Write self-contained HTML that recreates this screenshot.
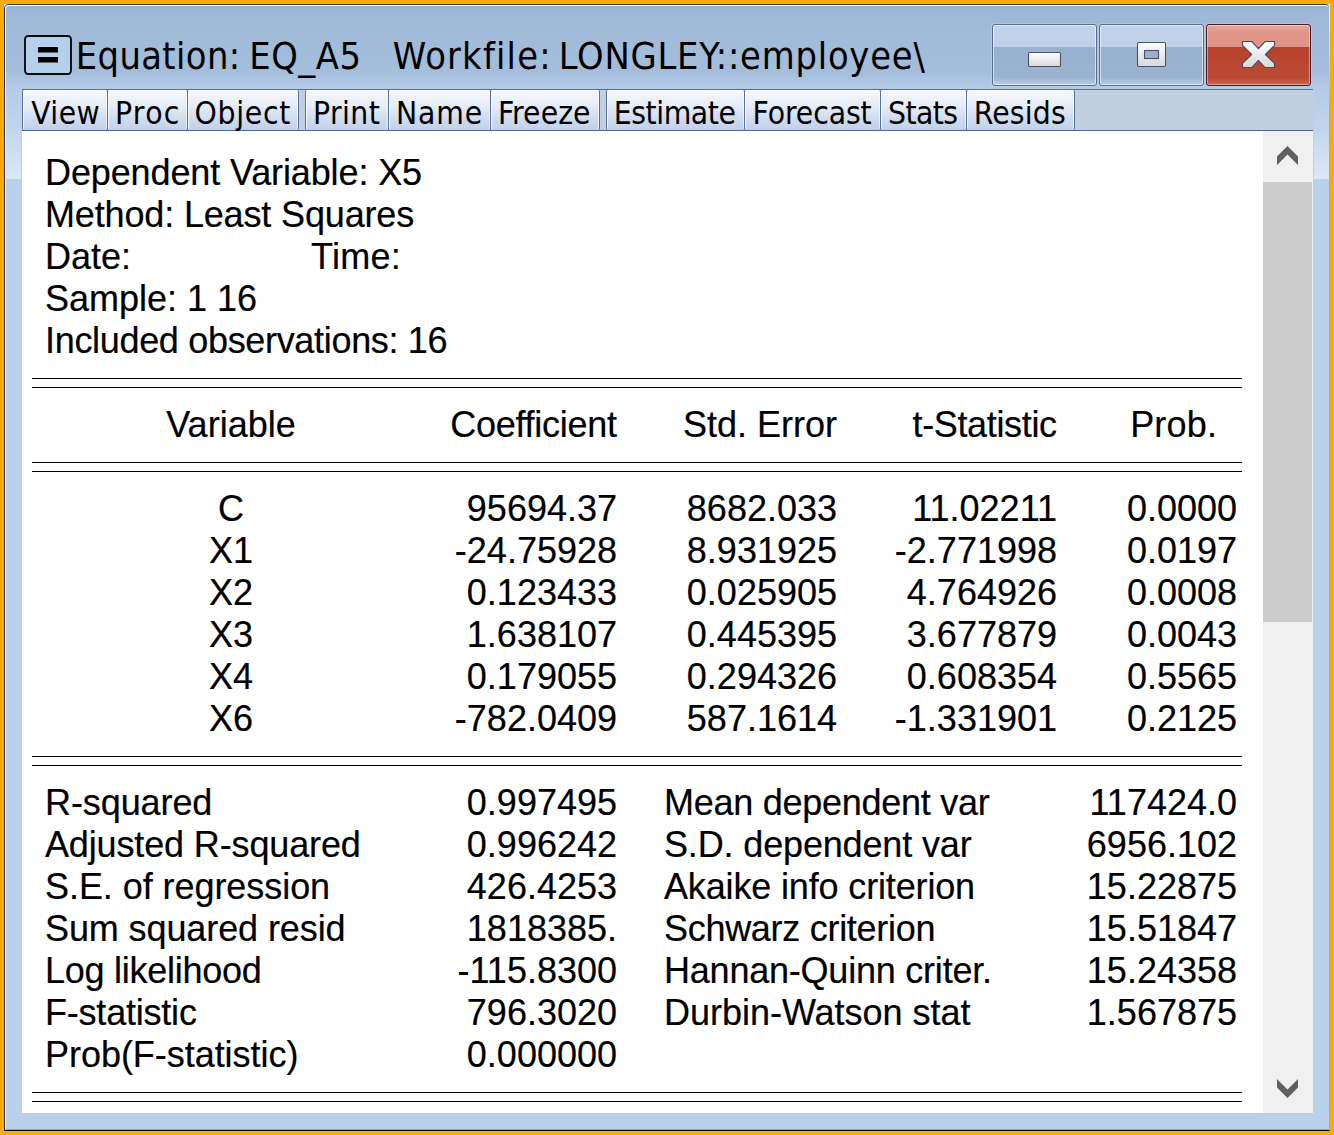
<!DOCTYPE html>
<html lang="en">
<head>
<meta charset="utf-8">
<title>Equation: EQ_A5 Workfile: LONGLEY::employee\</title>
<style>
html,body{margin:0;padding:0;}
body{width:1334px;height:1135px;overflow:hidden;background:#f8ab0a;position:relative;font-family:"Liberation Sans",Arial,sans-serif;color:#000;}
.abs{position:absolute;}
#win{position:absolute;left:4px;top:4px;width:1326px;height:1127px;background:#b9d1ea;overflow:hidden;}
#cap{position:absolute;left:0;top:0;width:1326px;height:175px;border-radius:5px 5px 0 0;background:linear-gradient(to bottom,#93afcf 0px,#97b3d2 2px,#9eb8d7 9px,#a1bbd9 30px,#a3bddb 67px,#b5cce8 86px,#c1d6ed 126px,#dce8f5 175px);}
#o1{position:absolute;left:0;top:0;width:1326px;height:1127px;box-sizing:border-box;border:1px solid;border-color:#3a3a3a #3ccefb #000 #2b2b2b;border-radius:5px 5px 0 0;}
#o2{position:absolute;left:1px;top:1px;width:1324px;height:1125px;box-sizing:border-box;border:1px solid;border-color:#fff transparent #22d3f5 #fff;border-radius:4px 4px 0 0;}
#o3{position:absolute;left:1325px;top:0;width:1px;height:110px;background:linear-gradient(to bottom,#d6f3ff 0px,#a5e8fd 50px,#3ccefb 110px);}
.cn{position:absolute;top:0;width:4px;height:4px;background:#e6f2fd;}
.strip{position:absolute;top:85px;width:1px;height:90px;background:#b9d1ea;}
#client{position:absolute;left:18px;top:127px;width:1291px;height:982px;background:#fff;overflow:hidden;}
#tb{position:absolute;left:18px;top:85px;width:1291px;height:42px;background:#c2cfe0;border-top:1px solid #54719a;border-bottom:1px solid #4e6a90;box-sizing:border-box;}
.btn{position:absolute;top:0px;height:40px;box-sizing:border-box;border:1px solid #587197;border-top:none;border-bottom:none;background:linear-gradient(to bottom,#f6f8fc 0%,#e6ecf6 40%,#d0dcee 72%,#c0d1e8 100%);box-shadow:inset 1px 0 0 rgba(255,255,255,.75),inset -1px 0 0 rgba(255,255,255,.55),inset 0 1px 0 rgba(255,255,255,.8);font-family:"DejaVu Sans Condensed","DejaVu Sans","Liberation Sans",sans-serif;font-stretch:condensed;font-size:31.5px;white-space:nowrap;border-radius:2px;}
.btn span{position:absolute;top:-7px;height:60px;line-height:60px;white-space:pre;}
#title{position:absolute;left:0;top:22px;width:980px;height:60px;font-family:"DejaVu Sans Condensed","DejaVu Sans","Liberation Sans",sans-serif;font-stretch:condensed;font-size:37.6px;line-height:60px;white-space:pre;}
#title span{position:absolute;top:0;white-space:pre;}
.r{position:absolute;left:0;height:42px;line-height:42px;font-size:36px;white-space:pre;-webkit-text-stroke:0.2px #000;}
.r span{position:absolute;top:0;white-space:pre;}
.hl{position:absolute;left:10px;width:1210px;height:1px;background:#000;}
.cbtn{position:absolute;top:20px;height:62px;box-sizing:border-box;border:1px solid #566b8d;border-radius:3px;}
.cb1{background:linear-gradient(to bottom,#bfd4ea 0px,#bdd2e9 22px,#98b1cf 22px,#9bb2d1 52px,#b6ceea 60px);box-shadow:inset 0 0 0 1px rgba(255,255,255,.6),0 0 0 1px rgba(190,212,236,.5);}
.cbx{border-color:#4a1826;background:linear-gradient(to bottom,#e8a99c 0px,#df9587 8px,#df9486 22px,#b8432d 22px,#bb4a35 53px,#cc6651 60px);box-shadow:inset 0 0 0 1px rgba(255,225,215,.5),0 0 0 1px rgba(190,212,236,.5);}
</style>
</head>
<body>
<div id="win">
<div class="cn" style="left:0"></div><div class="cn" style="left:1322px"></div>
<div id="cap"></div>
<div class="strip" style="left:17px"></div><div class="strip" style="left:1309px"></div>
<svg class="abs" style="left:19px;top:30px" width="50" height="42" viewBox="0 0 50 42">
<rect x="2" y="2" width="46" height="38" rx="3.2" ry="3.2" fill="#b6cfea" stroke="#0c0c10" stroke-width="1.9"/>
<rect x="15" y="13" width="20" height="5.5" fill="#000"/>
<rect x="15" y="23" width="20" height="5.5" fill="#000"/>
</svg>
<div id="title"><span style="left:71.8px;letter-spacing:0.40px">Equation:</span> <span style="left:245.2px;letter-spacing:0.58px">EQ_A5</span> <span style="left:388.7px;letter-spacing:1.21px">Workfile:</span> <span style="left:554.7px;letter-spacing:0.80px">LONGLEY::employee\</span></div>
<div class="cbtn cb1" style="left:988px;width:105px"></div>
<div class="cbtn cb1" style="left:1095px;width:105px"></div>
<div class="cbtn cbx" style="left:1202px;width:105px"></div>
<svg class="abs" style="left:1020px;top:44px" width="40" height="24" viewBox="0 0 40 24">
<defs><linearGradient id="g1" x1="0" y1="0" x2="0" y2="1"><stop offset="0" stop-color="#fff"/><stop offset="1" stop-color="#d8d8d8"/></linearGradient></defs>
<rect x="4.5" y="4.5" width="32" height="14" rx="1.2" fill="url(#g1)" stroke="#4b5169" stroke-width="1.1"/>
</svg>
<svg class="abs" style="left:1128px;top:34px" width="40" height="34" viewBox="0 0 40 34">
<rect x="5.5" y="4.5" width="28" height="24" rx="1.2" fill="url(#g1)" stroke="#4b5169" stroke-width="1.1"/>
<rect x="12.500" y="12.500" width="14" height="8" fill="#98b1cf" stroke="#4b5169" stroke-width="1.1"/>
</svg>
<svg class="abs" style="left:1234px;top:34px" width="44" height="36" viewBox="0 0 44 36">
<path d="M4.5 3.5 L13.7 3.5 L20.4 10.6 L27.1 3.5 L36.5 3.5 L36.5 7.4 L27.4 16.5 L36.5 25.4 L36.5 29.5 L27.1 29.5 L20.4 22.3 L13.7 29.5 L4.5 29.5 L4.5 25.4 L13.6 16.5 L4.5 7.4 Z" fill="url(#g1)" stroke="#414c66" stroke-width="1.1" stroke-linejoin="round"/>
</svg>
<div id="tb">
<div class="btn" style="left:0px;width:86px"><span style="left:8.2px;letter-spacing:0.47px">View</span></div>
<div class="btn" style="left:85px;width:81px"><span style="left:7.0px;letter-spacing:1.33px">Proc</span></div>
<div class="btn" style="left:165px;width:112px"><span style="left:6.5px;letter-spacing:0.70px">Object</span></div>
<div class="btn" style="left:283px;width:84px"><span style="left:7.0px;letter-spacing:0.42px">Print</span></div>
<div class="btn" style="left:366px;width:103px"><span style="left:7.0px;letter-spacing:0.87px">Name</span></div>
<div class="btn" style="left:468px;width:110px"><span style="left:7.0px;letter-spacing:0.08px">Freeze</span></div>
<div class="btn" style="left:584px;width:139px"><span style="left:6.8px;letter-spacing:-0.44px">Estimate</span></div>
<div class="btn" style="left:722px;width:137px"><span style="left:7.6px;letter-spacing:-0.09px">Forecast</span></div>
<div class="btn" style="left:858px;width:87px"><span style="left:7.0px;letter-spacing:-0.55px">Stats</span></div>
<div class="btn" style="left:944px;width:109px"><span style="left:6.7px;letter-spacing:0.18px">Resids</span></div>
</div>
<div id="client">
<div class="r" style="top:21px;width:1241px"><span style="left:23px;letter-spacing:-0.12px">Dependent Variable: X5</span></div>
<div class="r" style="top:63px;width:1241px"><span style="left:23px;letter-spacing:-0.15px">Method: Least Squares</span></div>
<div class="r" style="top:105px;width:1241px"><span style="left:23px">Date:</span><span style="left:289px;letter-spacing:0.30px">Time:</span></div>
<div class="r" style="top:147px;width:1241px"><span style="left:23px">Sample: 1 16</span></div>
<div class="r" style="top:189px;width:1241px"><span style="left:23px;letter-spacing:-0.32px">Included observations: 16</span></div>
<div class="r" style="top:273px;width:1241px"><span style="left:9px;width:400px;text-align:center">Variable</span><span style="right:646.3px;letter-spacing:-0.27px">Coefficient</span><span style="right:426.0px">Std. Error</span><span style="right:206.3px;letter-spacing:-0.35px">t-Statistic</span><span style="right:45.8px;letter-spacing:0.20px">Prob.</span></div>
<div class="r" style="top:357px;width:1241px"><span style="left:9px;width:400px;text-align:center">C</span><span style="right:646.0px">95694.37</span><span style="right:426.0px">8682.033</span><span style="right:206.0px">11.02211</span><span style="right:26.0px">0.0000</span></div>
<div class="r" style="top:399px;width:1241px"><span style="left:9px;width:400px;text-align:center">X1</span><span style="right:646.0px">-24.75928</span><span style="right:426.0px">8.931925</span><span style="right:206.0px">-2.771998</span><span style="right:26.0px">0.0197</span></div>
<div class="r" style="top:441px;width:1241px"><span style="left:9px;width:400px;text-align:center">X2</span><span style="right:646.0px">0.123433</span><span style="right:426.0px">0.025905</span><span style="right:206.0px">4.764926</span><span style="right:26.0px">0.0008</span></div>
<div class="r" style="top:483px;width:1241px"><span style="left:9px;width:400px;text-align:center">X3</span><span style="right:646.0px">1.638107</span><span style="right:426.0px">0.445395</span><span style="right:206.0px">3.677879</span><span style="right:26.0px">0.0043</span></div>
<div class="r" style="top:525px;width:1241px"><span style="left:9px;width:400px;text-align:center">X4</span><span style="right:646.0px">0.179055</span><span style="right:426.0px">0.294326</span><span style="right:206.0px">0.608354</span><span style="right:26.0px">0.5565</span></div>
<div class="r" style="top:567px;width:1241px"><span style="left:9px;width:400px;text-align:center">X6</span><span style="right:646.0px">-782.0409</span><span style="right:426.0px">587.1614</span><span style="right:206.0px">-1.331901</span><span style="right:26.0px">0.2125</span></div>
<div class="r" style="top:651px;width:1241px"><span style="left:23px;letter-spacing:-0.09px">R-squared</span><span style="right:646.0px">0.997495</span><span style="left:642px;letter-spacing:-0.27px">Mean dependent var</span><span style="right:26.0px">117424.0</span></div>
<div class="r" style="top:693px;width:1241px"><span style="left:23px;letter-spacing:-0.14px">Adjusted R-squared</span><span style="right:646.0px">0.996242</span><span style="left:642px;letter-spacing:-0.15px">S.D. dependent var</span><span style="right:26.0px">6956.102</span></div>
<div class="r" style="top:735px;width:1241px"><span style="left:23px;letter-spacing:-0.06px">S.E. of regression</span><span style="right:646.0px">426.4253</span><span style="left:642px;letter-spacing:-0.15px">Akaike info criterion</span><span style="right:26.0px">15.22875</span></div>
<div class="r" style="top:777px;width:1241px"><span style="left:23px;letter-spacing:-0.10px">Sum squared resid</span><span style="right:646.0px">1818385.</span><span style="left:642px;letter-spacing:-0.29px">Schwarz criterion</span><span style="right:26.0px">15.51847</span></div>
<div class="r" style="top:819px;width:1241px"><span style="left:23px;letter-spacing:-0.27px">Log likelihood</span><span style="right:646.0px">-115.8300</span><span style="left:642px;letter-spacing:-0.22px">Hannan-Quinn criter.</span><span style="right:26.0px">15.24358</span></div>
<div class="r" style="top:861px;width:1241px"><span style="left:23px;letter-spacing:-0.21px">F-statistic</span><span style="right:646.0px">796.3020</span><span style="left:642px;letter-spacing:-0.01px">Durbin-Watson stat</span><span style="right:26.0px">1.567875</span></div>
<div class="r" style="top:903px;width:1241px"><span style="left:23px;letter-spacing:-0.04px">Prob(F-statistic)</span><span style="right:646.0px">0.000000</span></div>
<div class="hl" style="top:247px"></div>
<div class="hl" style="top:256px"></div>
<div class="hl" style="top:331px"></div>
<div class="hl" style="top:340px"></div>
<div class="hl" style="top:625px"></div>
<div class="hl" style="top:634px"></div>
<div class="hl" style="top:961px"></div>
<div class="hl" style="top:970px"></div>
<div class="abs" style="left:1241px;top:0;width:50px;height:982px;background:#f0f0f0"></div>
<div class="abs" style="left:1241px;top:51px;width:49px;height:440px;background:#cdcdcd"></div>
<svg class="abs" style="left:1241px;top:0" width="50" height="50" viewBox="0 0 50 50"><path d="M14 25.500 L24.500 15 L35 25.500 L35 34 L24.500 23.500 L14 34 Z" fill="#606060"/></svg>
<svg class="abs" style="left:1241px;top:932px" width="50" height="50" viewBox="0 0 50 50"><path d="M14 24.500 L24.500 35 L35 24.500 L35 16 L24.500 26.500 L14 16 Z" fill="#606060"/></svg>
</div>
<div id="o1"></div><div id="o2"></div><div id="o3"></div>
</div>
</body>
</html>
